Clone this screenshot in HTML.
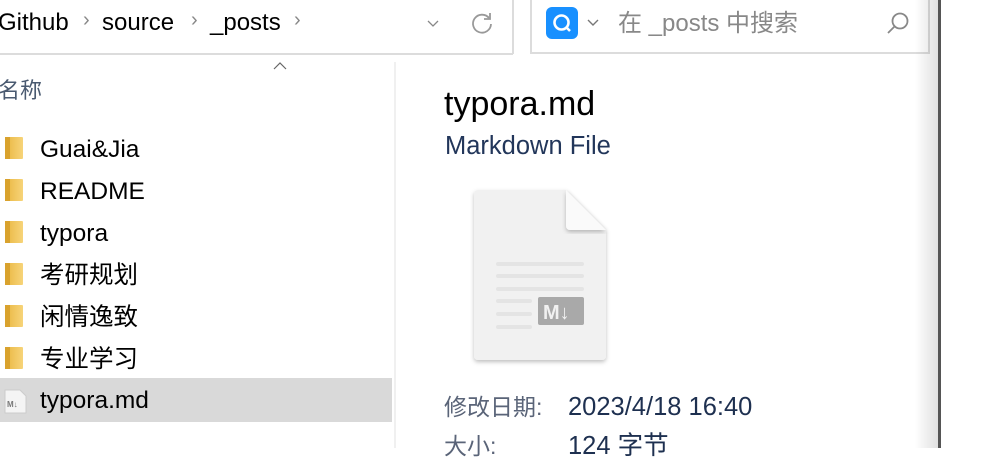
<!DOCTYPE html>
<html><head><meta charset="utf-8"><style>
*{margin:0;padding:0;box-sizing:border-box}
body{width:994px;height:448px;overflow:hidden;background:#fff;font-family:"Liberation Sans","Noto Sans CJK SC",sans-serif;position:relative;color:#000}
.a{position:absolute;white-space:nowrap}
.row{position:absolute;left:0;width:392px;height:42px}
.row .t{position:absolute;left:40px;top:8px;font-size:24.5px;line-height:30px;height:30px}
.fold{position:absolute;left:5px;top:10px;width:18px;height:22px;background:linear-gradient(90deg,#e9b63f,#f7d47a);border-radius:1px}
.fold:before{content:"";position:absolute;left:0;top:0;width:5px;height:22px;background:#d9a22d}
</style></head><body>
<div class="a" style="left:0;top:53px;width:513px;height:2px;background:#dcdcdc"></div>
<div class="a" style="left:512px;top:0;width:2px;height:54px;background:#dcdcdc"></div>
<div class="a" style="left:-2px;top:8px;font-size:24px;line-height:30px">Github</div>
<div class="a" style="left:83px;top:9px;font-size:20px;color:#888">›</div>
<div class="a" style="left:102px;top:8px;font-size:24px;line-height:30px">source</div>
<div class="a" style="left:191px;top:9px;font-size:20px;color:#888">›</div>
<div class="a" style="left:210px;top:8px;font-size:24px;line-height:30px">_posts</div>
<div class="a" style="left:294px;top:9px;font-size:20px;color:#888">›</div>
<svg class="a" style="left:425px;top:15px" width="16" height="16"><path d="M3 6l5 5 5-5" fill="none" stroke="#888" stroke-width="1.3"/></svg>
<svg class="a" style="left:469px;top:10px" width="26" height="26"><path d="M20 8A9 9 0 1 0 22 14" fill="none" stroke="#999" stroke-width="1.8"/><path d="M21 3v6h-6" fill="none" stroke="#999" stroke-width="1.8"/></svg>
<div class="a" style="left:530px;top:-2px;width:400px;height:56px;border:2px solid #dcdcdc"></div>
<div class="a" style="left:546px;top:7px;width:32px;height:32px;background:#1890ff;border-radius:6px"></div>
<svg class="a" style="left:546px;top:7px" width="32" height="32"><circle cx="15.5" cy="15.5" r="7" fill="none" stroke="#fff" stroke-width="2.6"/><path d="M20 20l4 4" stroke="#fff" stroke-width="2.6"/></svg>
<svg class="a" style="left:586px;top:16px" width="14" height="14"><path d="M2 4l5 5 5-5" fill="none" stroke="#777" stroke-width="1.4"/></svg>
<div class="a" style="left:618px;top:9px;font-size:24px;line-height:30px;color:#888">在 _posts 中搜索</div>
<svg class="a" style="left:884px;top:10px" width="28" height="28"><circle cx="16" cy="11" r="7.5" fill="none" stroke="#888" stroke-width="1.8"/><path d="M10.5 16.5L4 23" stroke="#888" stroke-width="1.8"/></svg>
<div class="a" style="left:915px;top:0;width:23px;height:448px;background:linear-gradient(90deg,rgba(0,0,0,0),rgba(0,0,0,.12))"></div>
<div class="a" style="left:938px;top:0;width:3px;height:448px;background:#555"></div>
<svg class="a" style="left:272px;top:61px" width="16" height="10"><path d="M2 8l6-6 6 6" fill="none" stroke="#666" stroke-width="1.2"/></svg>
<div class="a" style="left:-2px;top:77px;font-size:22px;line-height:28px;color:#4a5a70">名称</div>
<div class="a" style="left:394px;top:62px;width:2px;height:386px;background:#f0f0f0"></div>
<div class="row" style="top:127px"><div class="fold"></div><div class="t">Guai&amp;Jia</div></div>
<div class="row" style="top:169px"><div class="fold"></div><div class="t">README</div></div>
<div class="row" style="top:211px"><div class="fold"></div><div class="t">typora</div></div>
<div class="row" style="top:253px"><div class="fold"></div><div class="t">考研规划</div></div>
<div class="row" style="top:295px"><div class="fold"></div><div class="t">闲情逸致</div></div>
<div class="row" style="top:337px"><div class="fold"></div><div class="t">专业学习</div></div>
<div class="row" style="top:378px;height:44px;background:#d9d9d9"><svg class="a" style="left:4px;top:10px" width="24" height="26"><path d="M1 2h15l6 6v17H1z" fill="#f4f4f4" stroke="#ccc"/><text x="3" y="19" font-size="8" font-weight="bold" fill="#777" font-family="Liberation Sans">M↓</text></svg><div class="t" style="top:8px">typora.md</div></div>
<div class="a" style="left:444px;top:85px;font-size:34px;line-height:38px">typora.md</div>
<div class="a" style="left:445px;top:131px;font-size:25.5px;line-height:30px;color:#22365a">Markdown File</div>
<svg class="a" style="left:470px;top:186px" width="142" height="182">
<defs><filter id="s"><feDropShadow dx="0" dy="2" stdDeviation="2" flood-opacity=".25"/></filter></defs>
<path d="M8 4h88l40 40v126a4 4 0 0 1-4 4H8a4 4 0 0 1-4-4V8a4 4 0 0 1 4-4z" fill="#f1f1f1" filter="url(#s)"/>
<path d="M96 4v36a4 4 0 0 0 4 4h36z" fill="#fafafa" filter="url(#s)"/>
<g fill="#e4e4e4"><rect x="26" y="76" width="88" height="4" rx="2"/><rect x="26" y="88" width="88" height="4" rx="2"/><rect x="26" y="101" width="88" height="4" rx="2"/><rect x="26" y="113" width="36" height="4" rx="2"/><rect x="26" y="126" width="36" height="4" rx="2"/><rect x="26" y="139" width="36" height="4" rx="2"/></g>
<rect x="68" y="111" width="46" height="28" rx="2" fill="#a9a9a9"/>
<text x="73" y="133" font-size="20" font-weight="bold" fill="#f1f1f1" font-family="Liberation Sans">M↓</text>
</svg>
<div class="a" style="left:444px;top:392px;font-size:23px;line-height:30px;color:#5a6478">修改日期:</div>
<div class="a" style="left:568px;top:392px;font-size:25.5px;line-height:30px;color:#1e3050">2023/4/18 16:40</div>
<div class="a" style="left:444px;top:431px;font-size:23px;line-height:30px;color:#5a6478">大小:</div>
<div class="a" style="left:568px;top:431px;font-size:25.5px;line-height:30px;color:#1e3050">124 字节</div>
</body></html>
